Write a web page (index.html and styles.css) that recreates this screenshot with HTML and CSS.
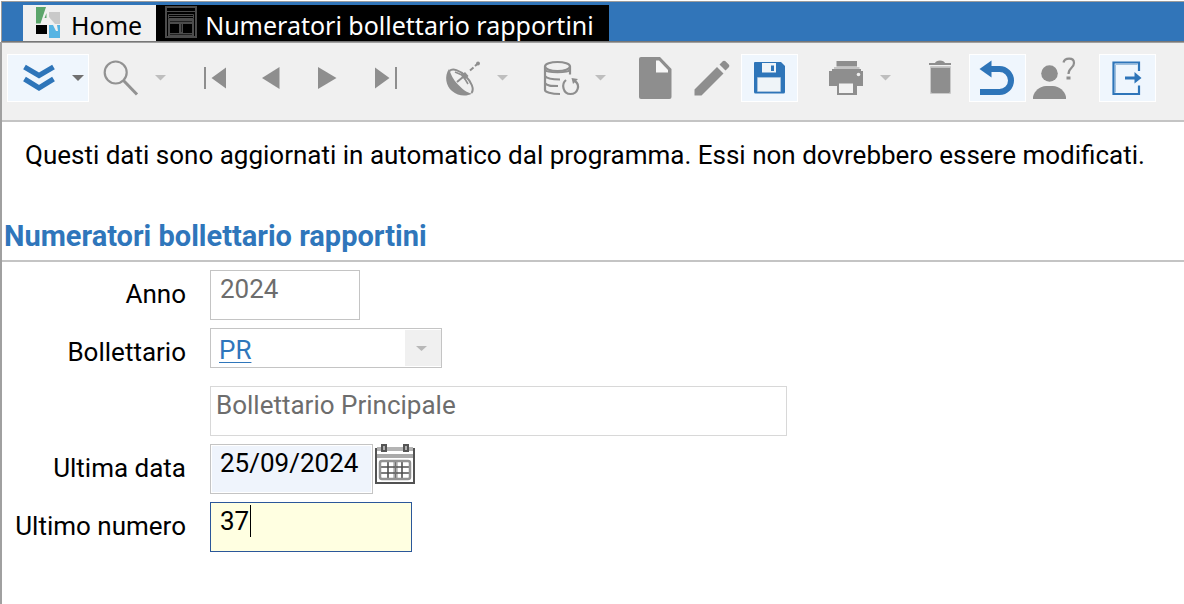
FILE: index.html
```html
<!DOCTYPE html>
<html lang="it">
<head>
<meta charset="utf-8">
<title>Numeratori bollettario rapportini</title>
<link rel="stylesheet" href="styles.css">
</head>
<body>
<nav class="tabs">
  <button class="tab" type="button">
    <svg class="tab-icon" viewBox="34 6 32 32" aria-hidden="true">
      <path fill="#5ba56b" d="M36 7h10l-5.500 16.500H36z"/>
      <path fill="#c9c9c9" d="M49 12h11v12h-5l-6-7z"/>
      <path fill="#5ba56b" d="M46.500 13v5h-2z"/>
      <path fill="#000" d="M36 25h11v9H36z"/>
      <path fill="#56b4e3" d="M49 25h4l3 6h2l-1-6h3v13H49z"/>
    </svg>
    <span>Home</span>
  </button>
  <button class="tab tab-active" type="button">
    <svg class="tab-icon" viewBox="165 7 32 32" aria-hidden="true">
      <path fill="none" stroke="#4c4c4c" stroke-width="2" d="M166 8h30v30h-30z"/>
      <path fill="none" stroke="#4c4c4c" d="M167 12.500h28M168.500 15.500h25v4h-25zM169 17.500h24"/>
      <path fill="#4c4c4c" d="M168 20h26v5h-26zM168 25h2v12h-2zM179 23h4v12h-4zM192 25h2v12h-2zM168 34h26v3h-26z"/>
      <path fill="none" stroke="#222" d="M170 22.500h22M181.500 25v8M170 35.500h22"/>
    </svg>
    <span>Numeratori bollettario rapportini</span>
  </button>
</nav>

<main class="window">
  <div class="toolbar" role="toolbar" aria-label="Comandi">
    <div class="group">
      <button class="tool split raised" type="button" aria-label="Espandi">
        <svg class="icon" viewBox="7 54 57 48"><path fill="none" stroke="#2e75b9" stroke-width="5.200" d="M24.500 67L39 75.500 53.500 67M24.500 79L39 88l14.500-9"/></svg>
        <svg class="arrow arrow-dark" viewBox="0 0 25 48"><path d="M8 21h12l-6 6z"/></svg>
      </button>
      <button class="tool split" type="button" aria-label="Cerca">
        <svg class="icon" viewBox="89 54 57 48"><g fill="none" stroke="#929292"><circle cx="115.700" cy="72.500" r="11" stroke-width="2.200"/><path stroke-width="3" d="M123.500 80.500l13.500 14"/></g></svg>
        <svg class="arrow" viewBox="0 0 25 48"><path d="M9 21h11l-5.500 5.500z"/></svg>
      </button>
    </div>
    <div class="group">
      <button class="tool" type="button" aria-label="Primo"><svg class="icon" viewBox="187 54 57 48"><path fill="#8e8e8e" d="M204 67h2v22h-2zM211.500 78L226 67.500v21z"/></svg></button>
      <button class="tool" type="button" aria-label="Precedente"><svg class="icon" viewBox="244 54 57 48"><path fill="#8e8e8e" d="M262 78l17.500-11v22z"/></svg></button>
      <button class="tool" type="button" aria-label="Successivo"><svg class="icon" viewBox="301 54 57 48"><path fill="#8e8e8e" d="M336.500 78L318 67v22z"/></svg></button>
      <button class="tool" type="button" aria-label="Ultimo"><svg class="icon" viewBox="358 54 57 48"><path fill="#8e8e8e" d="M395 67h2v22h-2zM389.500 78L375 67.500v21z"/></svg></button>
    </div>
    <div class="group">
      <button class="tool split" type="button" aria-label="Antenna">
        <svg class="icon" viewBox="431 54 57 48">
          <path fill="#8e8e8e" d="M449 69c-5 7-3 17 3 22s14 6 20 2.500c-5-.500-9-4-14-9s-7-10-9-15.500z"/>
          <path fill="none" stroke="#8e8e8e" stroke-width="2" d="M449.500 71c3-3 10-1 16 5s9 13 6 17"/><path fill="none" stroke="#8e8e8e" stroke-width="1.600" d="M455 72l7 3M468 84l-3-5"/>
          <path fill="#8e8e8e" d="M461 75.500l4-3.500 3.500 4-4 4z"/>
          <path fill="none" stroke="#8e8e8e" stroke-width="2" d="M457 82l6-5M470 70.500l3.500-3M475 66l4-3.500"/>
          <circle cx="478" cy="63.500" r="1.900" fill="#8e8e8e"/>
        </svg>
        <svg class="arrow" viewBox="0 0 25 48"><path d="M9 21h11l-5.500 5.500z"/></svg>
      </button>
    </div>
    <div class="group">
      <button class="tool split" type="button" aria-label="Aggiorna archivio">
        <svg class="icon" viewBox="529 54 57 48">
          <g fill="none" stroke="#8e8e8e" stroke-width="2.200">
            <ellipse cx="557.500" cy="66.500" rx="12.500" ry="4.500"/>
            <path d="M545 66.500V90c0 2 6 4 15 4M570 66.500v8M545 70c2 3 23 3 25 0M545 76c2 3 7 3.500 15 3.500M545 83c2 3 6 3 13 3"/>
            <path d="M566 80c-5 4-3 14 4.500 14s10-9 4.500-13"/>
          </g>
          <path fill="#8e8e8e" d="M571.500 78l6.500 1-5 5z"/>
        </svg>
        <svg class="arrow" viewBox="0 0 25 48"><path d="M9 21h11l-5.500 5.500z"/></svg>
      </button>
    </div>
    <div class="group">
      <button class="tool" type="button" aria-label="Nuovo"><svg class="icon" viewBox="627 54 57 48"><path fill="#8e8e8e" d="M641 57h19l11.500 12v28a2 2 0 0 1-2 2H641a2 2 0 0 1-2-2V59a2 2 0 0 1 2-2z"/><path fill="#f6f6f6" d="M656 60.500h3l9 9.500v2.500h-12z"/></svg></button>
      <button class="tool" type="button" aria-label="Modifica"><svg class="icon" viewBox="684 54 57 48"><path fill="#8e8e8e" d="M694.500 89.500L717 67l6.500 6.500L701.500 95.500h-7zM719.500 64.500l3.500-3.500q1.500-.800 2.500.300l3.500 3.500q.900 1.200-.200 2.400l-3.300 3.300z"/></svg></button>
      <button class="tool raised" type="button" aria-label="Salva"><svg class="icon" viewBox="741 54 57 48"><path fill="#2e75b9" d="M755 62h26l4 4v26a1.500 1.500 0 0 1-1.500 1.500H755.500A1.500 1.500 0 0 1 754 92V63a1 1 0 0 1 1-1z"/><path fill="#eff4f8" d="M762 63h14v9.500h-14zM758 78h22.500v13H758z"/><path fill="#2e75b9" d="M771 65.500h3v5.500h-3z"/><path fill="none" stroke="#a5c1dc" d="M757.500 77.500h23v14h-23z"/></svg></button>
    </div>
    <div class="group">
      <button class="tool split" type="button" aria-label="Stampa">
        <svg class="icon" viewBox="814 54 57 48"><path fill="#8e8e8e" d="M836.500 61H857v5.500h-20.500z"/><path fill="#c4c4c4" d="M834 67h25.500v2H834z"/><path fill="#8e8e8e" d="M832 69h29v2h2v15h-6v9h-20v-9h-8V71h3z"/><path fill="#f2f2f2" d="M839 83.500h14v9.500h-14z"/><circle cx="858.500" cy="74.500" r="1.800" fill="#eee"/></svg>
        <svg class="arrow" viewBox="0 0 25 48"><path d="M9 21h11l-5.500 5.500z"/></svg>
      </button>
    </div>
    <div class="group">
      <button class="tool" type="button" aria-label="Elimina"><svg class="icon" viewBox="912 54 57 48"><path fill="#8e8e8e" d="M929 63h6q1-2.500 5-2.500t5 2.500h6v2h-22zM931 67.500h19V92a1 1 0 0 1-1 1h-17a1 1 0 0 1-1-1z"/><path fill="none" stroke="#c9c9c9" d="M930.500 66.500h20V93.500h-20z"/></svg></button>
      <button class="tool raised" type="button" aria-label="Annulla"><svg class="icon" viewBox="969 54 57 48"><path fill="#2e75b9" d="M979.500 69l12-8.500v17z"/><path fill="none" stroke="#2e75b9" stroke-width="6" d="M990 69h9.500a11.500 11.500 0 0 1 0 23H980"/></svg></button>
      <button class="tool" type="button" aria-label="Assistenza"><svg class="icon" viewBox="1026 54 57 48"><circle cx="1049.500" cy="73.500" r="8.300" fill="#8e8e8e"/><path fill="#8e8e8e" d="M1033 99v-2c1-6 7-11 13-11h7c6 0 12 5 13 11v2z"/><path fill="none" stroke="#8e8e8e" stroke-width="2.200" d="M1063.500 62.500c1-5 10.500-5.500 10.500.500 0 5-5.500 4.500-5.500 11"/><path fill="#8e8e8e" d="M1066.500 76.500h4v3h-4z"/></svg></button>
    </div>
    <div class="group">
      <button class="tool raised" type="button" aria-label="Esci"><svg class="icon" viewBox="1099 54 57 48"><path fill="none" stroke="#2e75b9" stroke-width="2.200" d="M1139 71v-8.500h-25.500V94H1139v-8.500"/><path fill="none" stroke="#9fc0de" d="M1115.500 92.500V64.500h22"/><path fill="#2e75b9" d="M1125 76.500h9.500V72l7 6-7 5.500V79.500h-9.500z"/></svg></button>
    </div>
  </div>

  <p class="notice">Questi dati sono aggiornati in automatico dal programma. Essi non dovrebbero essere modificati.</p>

  <h1 class="heading">Numeratori bollettario rapportini</h1>

  <form class="form">
    <label class="label" for="anno">Anno</label>
    <input class="field muted year" id="anno" value="2024" readonly>

    <label class="label" for="bollettario">Bollettario</label>
    <div class="combo">
      <select class="select" id="bollettario"><option>PR</option></select>
      <svg class="combo-arrow" viewBox="0 0 36 36" aria-hidden="true"><path d="M11 16h11l-5.500 5z"/></svg>
    </div>

    <input class="field muted description" value="Bollettario Principale" aria-label="Descrizione bollettario" readonly>

    <label class="label" for="data">Ultima data</label>
    <div class="date-row">
      <input class="field date" id="data" value="25/09/2024">
      <button class="calendar" type="button" aria-label="Apri calendario">
        <svg class="calendar-icon" viewBox="0 0 40 40">
          <path fill="#fff" stroke="#525252" stroke-width="2" d="M1 4v35h38V4"/>
          <path fill="#b4b4b4" d="M2 3h36v4H2z"/><path fill="#aaa" d="M2 10h36v4H2z"/>
          <path fill="#b0b0b0" stroke="#555" stroke-width="2" d="M7 1h4v6H7zM29 1h4v6h-4z"/>
          <path fill="#c4c4c4" d="M18 17h5v18h-5z"/>
          <path fill="none" stroke="#505050" stroke-width="1.600" d="M6 23h28M6 29h28M13 18v16M27 18v16"/>
          <path fill="none" stroke="#707070" stroke-width="1.600" d="M20.500 18v16"/>
          <rect x="5" y="17" width="30" height="18" rx="2" fill="none" stroke="#929292" stroke-width="2.500"/>
        </svg>
      </button>
    </div>

    <label class="label" for="numero">Ultimo numero</label>
    <div class="number-box">
      <input class="field number" id="numero" value="37">
      <span class="cursor"></span>
    </div>
  </form>
</main>
</body>
</html>
```
FILE: styles.css
```css
* { box-sizing: border-box; }

body {
  margin: 0;
  min-height: 100vh;
  display: flex;
  flex-direction: column;
  background: #fff;
  color: #000;
  font-family: Roboto, "Liberation Sans", sans-serif;
  font-size: 26px;
}

button, input, select { font: inherit; color: inherit; }

.tabs {
  display: flex;
  height: 41px;
  margin: 1px 0 0 1px;
  padding: 3px 0 0 21px;
  background: #3175b9;
  border-top: 1px solid #9c9c9c;
  border-bottom: 1px solid #777;
  border-left: 1px solid #9c9c9c;
}

.tab {
  display: flex;
  align-items: flex-start;
  gap: 5px;
  padding: 1px 14px 0 11px;
  border: 0;
  background: #f0f0f0;
  font-family: "Noto Sans", sans-serif;
  font-size: 25px;
  line-height: 38px;
  white-space: nowrap;
}

.tab-active {
  gap: 8px;
  padding: 1px 15px 0 9px;
  background: #000;
  color: #fff;
}

.tab-icon { width: 32px; height: 32px; flex: none; }

.window {
  flex: 1;
  border-top: 1px solid #a0a0a0;
  border-left: 2px solid #a0a0a0;
}

.toolbar {
  display: flex;
  gap: 16px;
  padding: 11px 5px 18px;
  background: #f0f0f0;
  border-bottom: 2px solid #c4c4c4;
}

.group { display: flex; }

.tool {
  display: flex;
  padding: 0;
  border: 0;
  background: none;
}

.raised {
  background: #eff6fd;
  box-shadow: inset 0 0 0 1px #fff;
}

.icon { width: 57px; height: 48px; flex: none; }
.arrow { width: 25px; height: 48px; flex: none; fill: #bebebe; }
.arrow-dark { fill: #707070; }

.notice {
  margin: 16px 0 0 23px;
  line-height: 34px;
}

.heading {
  margin: 40px 0 0;
  padding: 2px 2px 2px;
  border-bottom: 2px solid #c4c4c4;
  color: #2f76bb;
  font-size: 29px;
  font-weight: 700;
  line-height: 44px;
}

.form {
  display: grid;
  grid-template-columns: 184px 1fr;
  grid-auto-rows: 50px;
  gap: 8px 24px;
  padding-top: 8px;
}

.label {
  line-height: 48px;
  text-align: right;
}

.field {
  height: 50px;
  padding: 0 9px 12px;
  border: 1px solid #c4c4c4;
  background: #fff;
  outline: 0;
}

.muted { color: #6d6d6d; }
.year { width: 150px; }

.description {
  grid-column: 2;
  width: 577px;
  max-width: 100%;
  padding: 0 5px 12px;
  border-color: #d8d8d8;
}

.combo {
  position: relative;
  width: 232px;
  height: 40px;
}

.select {
  width: 100%;
  height: 40px;
  padding: 3px 40px 0 8px;
  appearance: none;
  border: 1px solid #c4c4c4;
  border-radius: 0;
  background: #fff;
  color: #2f76bb;
  text-decoration: underline 1px;
  text-underline-offset: 3px;
}

.combo-arrow {
  position: absolute;
  top: 2px;
  right: 1px;
  width: 36px;
  height: 36px;
  background: #f0f0f0;
  fill: #b8b8b8;
  pointer-events: none;
}

.date-row { display: flex; gap: 2px; }

.date {
  width: 163px;
  background: #eff4fc;
  box-shadow: inset 0 0 0 1px #fff;
}

.calendar {
  width: 40px;
  height: 40px;
  padding: 0;
  border: 0;
  background: none;
}

.calendar-icon { display: block; width: 40px; height: 40px; }

.number-box { position: relative; width: 202px; }

.number {
  width: 100%;
  border-color: #2b579a;
  background: #ffffe1;
}

.cursor {
  position: absolute;
  top: 3px;
  left: 40px;
  width: 1px;
  height: 32px;
  background: #000;
}
```
